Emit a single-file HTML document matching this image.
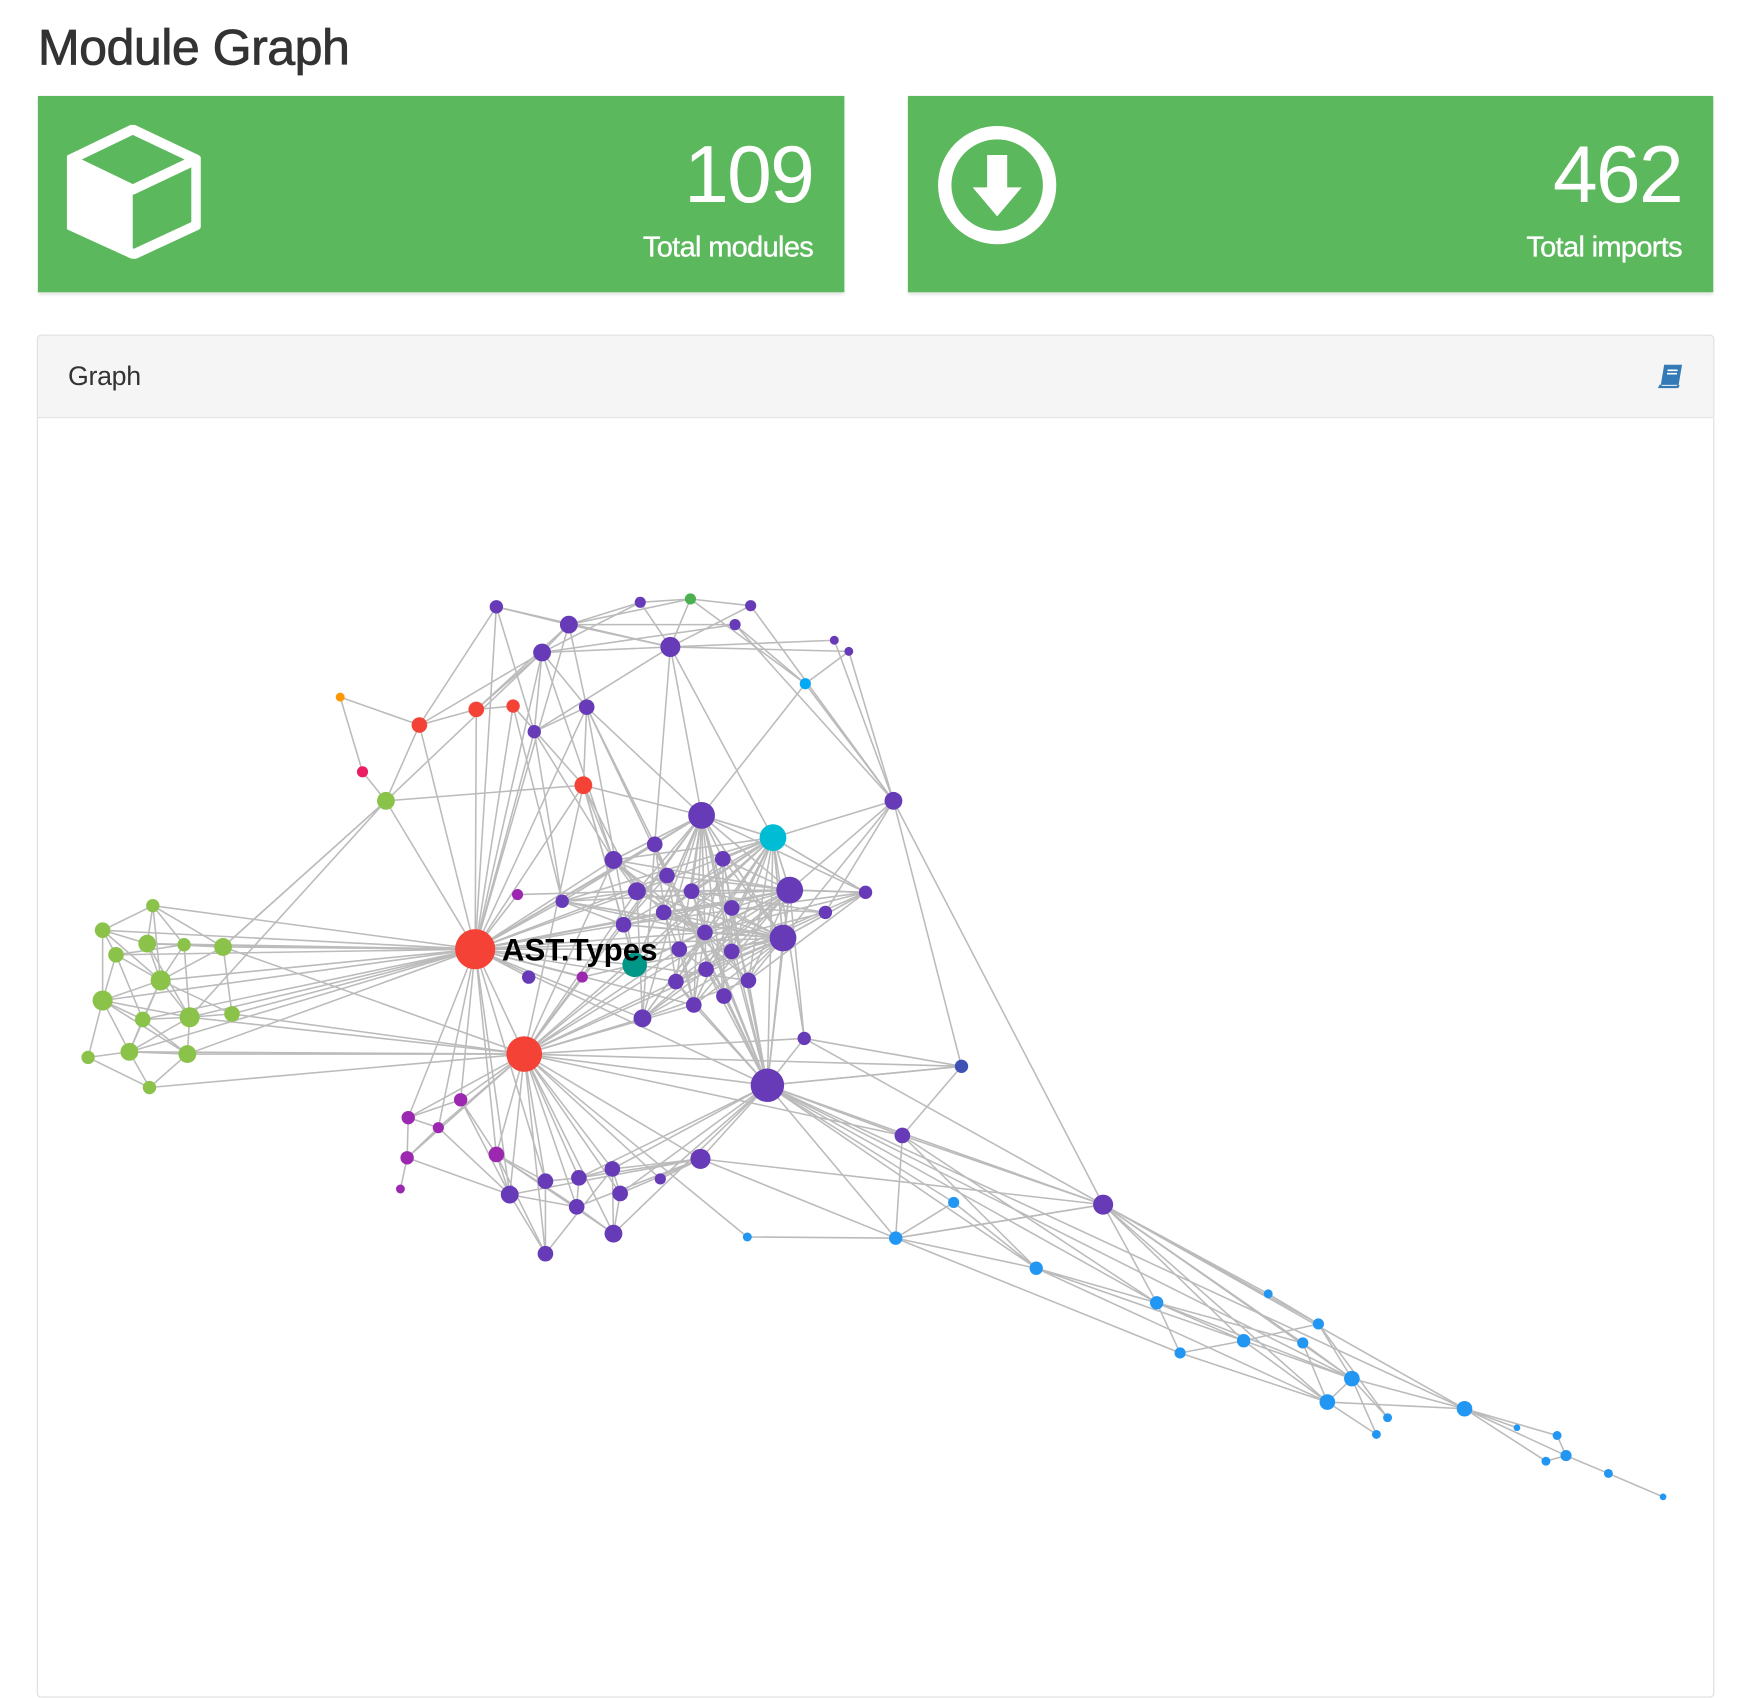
<!DOCTYPE html>
<html><head><meta charset="utf-8">
<style>
html,body{margin:0;padding:0;background:#fff;width:1748px;height:1676px;overflow:hidden}
#w{position:absolute;left:0;top:0;width:1567px;height:1503px;transform:scale(1.1154);transform-origin:0 0;font-family:"Liberation Sans",sans-serif;color:#333}
h1{position:absolute;left:34px;top:17px;margin:0;font-size:45px;font-weight:normal;letter-spacing:-0.5px;-webkit-text-stroke:0.7px #333}
.box{position:absolute;top:86px;height:176px;background:#5cb85c;box-shadow:0 2px 3px rgba(0,0,0,.12);color:#fff}
.num{position:absolute;right:28px;top:31px;font-size:72px;line-height:80px;letter-spacing:-1.5px}
.lbl{position:absolute;right:28px;top:120px;font-size:26px;letter-spacing:-0.6px;-webkit-text-stroke:0.3px #fff}
.panel{position:absolute;left:33px;top:300px;width:1502px;height:1220px;border:1px solid #ddd;border-radius:4px}
.ph{height:73px;background:#f5f5f5;border-bottom:1px solid #ddd;border-radius:4px 4px 0 0}
.ph span{position:absolute;left:27px;top:23px;font-size:24px;letter-spacing:-0.3px}
</style></head><body><div id="w">
<h1>Module Graph</h1>
<div class="box" style="left:34px;width:723px">
<svg style="position:absolute;left:26px;top:26px" width="120" height="120" viewBox="0 0 120 120">
<path d="M59 4 L116 31 L116 90 L60 116 L3 90 L3 31 Z" fill="none" stroke="#fff" stroke-width="9" stroke-linejoin="round"/>
<path d="M3 31 L59 58 L116 31" fill="none" stroke="#fff" stroke-width="9" stroke-linejoin="round"/>
<path d="M3 31 L59 58 L59 116 L3 90 Z" fill="#fff"/>
</svg>
<div class="num">109</div>
<div class="lbl">Total modules</div>
</div>
<div class="box" style="left:814px;width:722px">
<svg style="position:absolute;left:26px;top:26px" width="108" height="108" viewBox="0 0 108 108">
<circle cx="54" cy="54" r="47" fill="none" stroke="#fff" stroke-width="12"/>
<path d="M45 27 L63 27 L63 56 L76 56 L54 82 L32 56 L45 56 Z" fill="#fff"/>
</svg>
<div class="num">462</div>
<div class="lbl">Total imports</div>
</div>
<div class="panel"><div class="ph"><span>Graph</span>
<svg style="position:absolute;right:26px;top:24px" width="24" height="24" viewBox="0 0 24 24"><path d="M6 2 L22 2 L19 20 L3 20 Z" fill="#337ab7"/><path d="M3 20 L2 22 L18 22 L19 20" fill="none" stroke="#337ab7" stroke-width="2"/><path d="M9 7h9M8.5 10h9" stroke="#fff" stroke-width="1.5"/></svg>
</div></div>
<svg id="g" style="position:absolute;left:0;top:0" width="1567" height="1503"></svg>
</div>
<script>
var P='#673ab7',R='#f44336',G='#8bc34a',B='#2196f3';
var N={
g1:[137,812,6,G],g2:[92,834,7,G],g3:[104,856,7,G],g4:[132,846,8,G],g5:[165,847,6,G],g6:[200,849,8,G],g7:[144,879,9,G],g8:[92,897,9,G],g9:[128,914,7,G],g10:[170,912,9,G],g11:[208,909,7,G],g12:[79,948,6,G],g13:[116,943,8,G],g14:[168,945,8,G],g15:[134,975,6,G],g16:[346,718,8,G],
A:[426,851,18,R],A2:[470,945,16,R],r1:[376,650,7,R],r2:[427,636,7,R],r3:[460,633,6,R],r4:[523,704,8,R],pk:[325,692,5,'#e91e63'],or:[305,625,4,'#ff9800'],
t1:[445,544,6,P],t2:[510,560,8,P],t3:[574,540,5,P],tg:[619,537,5,'#4caf50'],t4:[673,543,5,P],t5:[659,560,5,P],t6:[601,580,9,P],t7:[486,585,8,P],t8:[748,574,4,P],t9:[761,584,4,P],lb:[722,613,5,'#03a9f4'],t10:[526,634,7,P],t11:[479,656,6,P],t12:[801,718,8,P],
c1:[629,731,12,P],cy:[693,751,12,'#00bcd4'],c2:[587,757,7,P],c3:[550,771,8,P],c4:[648,770,7,P],c5:[598,785,7,P],c6:[571,799,8,P],c7:[620,799,7,P],c8:[708,798,12,P],c9:[504,808,6,P],m1:[464,802,5,'#9c27b0'],c10:[595,818,7,P],c11:[656,814,7,P],c12:[559,829,7,P],c13:[632,836,7,P],c14:[740,818,6,P],c15:[776,800,6,P],c16:[702,841,12,P],c17:[609,851,7,P],c18:[656,853,7,P],tl:[569,865,11,'#009688'],c19:[633,869,7,P],c20:[474,876,6,P],m2:[522,876,5,'#9c27b0'],c21:[606,880,7,P],c22:[671,879,7,P],c23:[649,893,7,P],c24:[622,901,7,P],c25:[576,913,8,P],c26:[721,931,6,P],H:[688,973,15,P],ind:[862,956,6,'#3f51b5'],c27:[809,1018,7,P],
b1:[413,986,6,'#9c27b0'],b2:[366,1002,6,'#9c27b0'],b3:[393,1011,5,'#9c27b0'],b4:[365,1038,6,'#9c27b0'],b5:[359,1066,4,'#9c27b0'],b6:[445,1035,7,'#9c27b0'],b7:[628,1039,9,P],b8:[489,1059,7,P],b9:[519,1056,7,P],b10:[549,1048,7,P],b11:[592,1057,5,P],b12:[457,1071,8,P],b13:[556,1070,7,P],b14:[517,1082,7,P],b15:[550,1106,8,P],b16:[489,1124,7,P],
u1:[670,1109,4,B],u2:[803,1110,6,B],u3:[855,1078,5,B],Q:[989,1080,9,P],u4:[929,1137,6,B],u5:[1037,1168,6,B],u6:[1058,1213,5,B],u7:[1137,1160,4,B],u8:[1115,1202,6,B],u9:[1168,1204,5,B],u10:[1182,1187,5,B],u11:[1212,1236,7,B],u12:[1190,1257,7,B],u13:[1244,1271,4,B],u14:[1234,1286,4,B],u15:[1313,1263,7,B],u16:[1360,1280,3,B],u17:[1396,1287,4,B],u18:[1404,1305,5,B],u19:[1386,1310,4,B],u20:[1442,1321,4,B],u21:[1491,1342,3,B]};
var E=[];function c(a,l){l.split(' ').forEach(function(b){E.push([a,b])})}
c('A','g1 g2 g3 g4 g5 g6 g7 g8 g9 g10 g11 g13 g14 g16 r1 r2 r3 r4 t1 t7 t2 t10 t11 c1 c2 c3 c5 c6 c9 c10 c12 c17 tl c20 c21 c24 c25 A2 H b1 b2 b3 b6 b8 b12 c8 c16 c13');
c('A2','g6 g14 g13 g15 g11 g10 b1 b2 b3 b4 b6 b7 b8 b9 b10 b11 b12 b13 b14 b15 b16 c1 c3 c6 c12 c17 c21 c24 c25 c16 c8 H c27 ind r4 c26 cy u1 tl');
c('H','c1 cy c4 c8 c11 c13 c16 c18 c22 c23 c24 c21 c19 c26 b7 b10 b9 b11 b13 b15 u2 Q u15 u4 ind c27 u5 u11 c5 c7 c2');
c('g1','g2 g4 g6 g7 g5');c('g2','g3 g4 g8 g7');c('g3','g7 g8 g9 g5');c('g4','g5 g6 g7 g10');c('g5','g6 g10 g7');c('g6','g7 g16 g11');
c('g7','g8 g9 g10 g13 g11');c('g8','g9 g12 g13 g14 g10');c('g9','g10 g13 g14');c('g10','g11 g13 g14 g16');c('g12','g13 g15');c('g13','g14 g15');c('g14','g15');
c('g16','r1 pk r4 t7 g6');c('or','r1 pk');c('r1','r2 t1 t7');c('r2','r3 t2');c('r3','r4 c9');c('r4','t10 c1 c3 c6 tl c12');
c('t1','t2 t6 t11');c('t2','t3 tg t6 t7 t10 t5');c('t3','tg t7 t6');c('tg','t4 t6 lb');c('t4','t6 t12');c('t5','t7 t12 lb');c('t6','t7 t8 t9 c1 cy c2 t11');c('t7','t10 t11 r2 c3');c('t8','t12');c('t9','t12 lb');c('lb','c1 t12');
c('t10','c1 c2 c5 tl t11');c('t11','c3 c9');c('t12','cy c8 c14 ind Q c16');
var core='c1 cy c2 c3 c4 c5 c6 c7 c8 c9 c10 c11 c12 c13 c14 c15 c16 c17 c18 tl c19 c21 c22 c23 c24 c25'.split(' ');
core.forEach(function(a,i){['c1','cy','c8','c16','c13'].forEach(function(b){if(a!=b&&Math.abs(i*7)%3!=2)E.push([a,b])});E.push([a,core[(i+3)%core.length]]);E.push([a,core[(i+7)%core.length]])});
c('c26','cy ind c8');c('c15','c8 c16 cy');c('m1','A c6');c('m2','tl A');
c('b1','b2 b6 b12');c('b2','b3 b4');c('b3','b4 b12');c('b4','b5 b12');c('b6','b8 b12 b14 b16 b15');c('b7','b10 b9 b11 b12 b14 b13 u2 Q');c('b8','b9 b16');c('b9','b10 b14');c('b10','b13 b15 b16');c('b12','b16 b14');c('b13','b15');c('b14','b15');
c('ind','c27 H');c('c27','u2 u4 Q u5');c('u1','u2');c('u2','u4 u6 u3 Q');c('u3','H u4');c('Q','u5 u7 u8 u9 u10 u11 u15 u12 c26 u2');
c('u4','u5 u8 u12');c('u5','u6 u8 u9 u11');c('u6','u8 u12');c('u7','u10');c('u8','u10 u11 u12');c('u9','u12 u11');c('u10','u11 u13');c('u11','u12 u13 u14 u15');c('u12','u15 u14');c('u15','u16 u17 u18 u19');c('u17','u18');c('u18','u19 u20');c('u20','u21');
var s='';E.forEach(function(e){var a=N[e[0]],b=N[e[1]];if(a&&b)s+='<line x1="'+a[0]+'" y1="'+a[1]+'" x2="'+b[0]+'" y2="'+b[1]+'"/>'});
var g='<g stroke="#bbb" stroke-width="1.4">'+s+'</g>';
for(var k in N){var n=N[k];g+='<circle cx="'+n[0]+'" cy="'+n[1]+'" r="'+n[2]+'" fill="'+n[3]+'"/>'}
g+='<text x="450" y="861" font-family="Liberation Sans,sans-serif" font-weight="bold" font-size="28" fill="#000">AST.Types</text>';
document.getElementById('g').innerHTML=g;
</script>
</body></html>
